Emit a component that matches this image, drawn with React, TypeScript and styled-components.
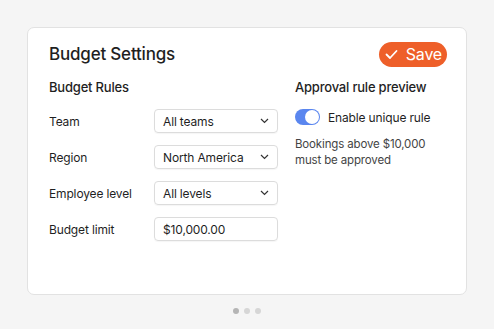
import React from 'react';
import styled, { createGlobalStyle } from 'styled-components';

const Global = createGlobalStyle`
  html, body {
    margin: 0;
    padding: 0;
    background: #f5f5f5;
    font-family: Inter, "Noto Sans", sans-serif;
    color: #1f1f1f;
  }
`;

const Page = styled.div`
  width: 494px;
  height: 329px;
  padding: 27px 27px 0 27px;
  box-sizing: border-box;
  display: flex;
  flex-direction: column;
  align-items: center;
`;

const Card = styled.div`
  width: 440px;
  height: 268px;
  box-sizing: border-box;
  background: #fff;
  border: 1px solid #e2e2e2;
  border-radius: 7px;
  padding: 13px 19px 0 21px;
`;

const Header = styled.div`
  display: flex;
  justify-content: space-between;
  align-items: center;
  height: 26px;
`;

const Title = styled.h1`
  margin: 0;
  font-size: 17px;
  font-weight: 500;
  letter-spacing: -0.2px;
`;

const SaveButton = styled.button`
  display: flex;
  align-items: center;
  gap: 8px;
  height: 25px;
  padding: 0 5px 0 6px;
  border: none;
  border-radius: 13px;
  background: #ee5f29;
  color: #fff;
  font-family: inherit;
  font-size: 16px;
  letter-spacing: -0.2px;
`;

const Columns = styled.div`
  display: grid;
  grid-template-columns: 246px 1fr;
  margin-top: 11px;
  letter-spacing: -0.15px;
`;

const SectionTitle = styled.h2`
  margin: 0 0 13px 0;
  font-size: 13px;
  font-weight: 500;
  height: 18px;
  line-height: 18px;
  letter-spacing: -0.2px;
`;

const Rows = styled.div`
  display: flex;
  flex-direction: column;
  gap: 12px;
`;

const Row = styled.div`
  display: flex;
  align-items: center;
  height: 24px;
`;

const Label = styled.span`
  width: 105px;
  font-size: 12px;
`;

const Field = styled.div`
  width: 124px;
  height: 24px;
  box-sizing: border-box;
  border: 1px solid #dcdcdc;
  border-radius: 4px;
  display: flex;
  align-items: center;
  justify-content: space-between;
  padding: 0 8px 0 8px;
  font-size: 12px;
  box-shadow: 0 1px 1px rgba(0, 0, 0, 0.04);
`;

const ToggleRow = styled.div`
  display: flex;
  align-items: center;
  gap: 8px;
  font-size: 12px;
`;

const Toggle = styled.div`
  width: 25px;
  height: 16px;
  border-radius: 8px;
  background: #5a86ef;
  position: relative;
  &::after {
    content: '';
    position: absolute;
    right: 1px;
    top: 1px;
    width: 14px;
    height: 14px;
    border-radius: 50%;
    background: #fff;
  }
`;

const Note = styled.p`
  margin: 11px 0 0 0;
  font-size: 11.5px;
  line-height: 16px;
  color: #444;
`;

const Dots = styled.div`
  display: flex;
  gap: 5px;
  margin-top: 13px;
`;

const Dot = styled.span<{ $active?: boolean }>`
  width: 6px;
  height: 6px;
  border-radius: 50%;
  background: ${(p) => (p.$active ? '#b5b5b5' : '#d6d6d6')};
`;

const Chevron = () => (
  <svg width="9" height="6" viewBox="0 0 9 6">
    <path d="M1 1l3.5 3.5L8 1" fill="none" stroke="#333" strokeWidth="1.2" />
  </svg>
);

const Check = () => (
  <svg width="13" height="11" viewBox="0 0 13 11">
    <path d="M1.5 5.5l3.5 3.5 6.5-7" fill="none" stroke="#fff" strokeWidth="1.8" strokeLinecap="round" strokeLinejoin="round" />
  </svg>
);

const rows = [
  { label: 'Team', value: 'All teams', select: true },
  { label: 'Region', value: 'North America', select: true },
  { label: 'Employee level', value: 'All levels', select: true },
  { label: 'Budget limit', value: '$10,000.00', select: false },
];

const App: React.FC = () => {
  return (
    <>
      <Global />
      <Page>
        <Card>
          <Header>
            <Title>Budget Settings</Title>
            <SaveButton>
              <Check />
              Save
            </SaveButton>
          </Header>
          <Columns>
            <div>
              <SectionTitle>Budget Rules</SectionTitle>
              <Rows>
                {rows.map((r) => (
                  <Row key={r.label}>
                    <Label>{r.label}</Label>
                    <Field>
                      {r.value}
                      {r.select && <Chevron />}
                    </Field>
                  </Row>
                ))}
              </Rows>
            </div>
            <div>
              <SectionTitle>Approval rule preview</SectionTitle>
              <ToggleRow>
                <Toggle />
                Enable unique rule
              </ToggleRow>
              <Note>
                Bookings above $10,000
                <br />
                must be approved
              </Note>
            </div>
          </Columns>
        </Card>
        <Dots>
          <Dot $active />
          <Dot />
          <Dot />
        </Dots>
      </Page>
    </>
  );
};

export default App;
